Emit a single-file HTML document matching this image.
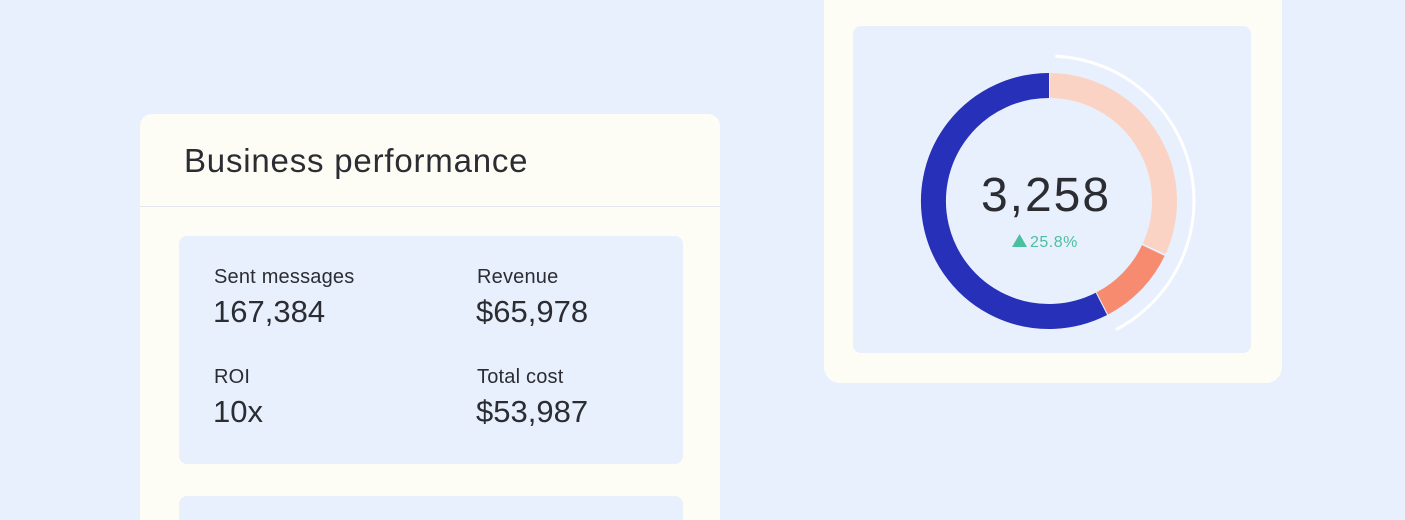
<!DOCTYPE html>
<html style="width:1405px;height:520px;overflow:hidden"><head><style>
*{margin:0;padding:0;box-sizing:border-box}
body{width:1405px;height:520px;background:#e8f0fe;position:relative;overflow:hidden;font-family:"Liberation Sans",sans-serif;color:#2b2d33}
.card{position:absolute;left:140px;top:114px;width:580px;height:406px;background:#fdfdf5;border-radius:12px 12px 0 0;overflow:hidden}
.hd{height:93px;border-bottom:1.5px solid #e3e6ec}
.hd h1{position:absolute;left:44px;top:28px;font-weight:400;font-size:33px;letter-spacing:0.8px}
.box{position:absolute;left:39px;width:504px;background:#e8f0fe;border-radius:8px}
.lab{position:absolute;font-size:20px;letter-spacing:0.2px}
.val{position:absolute;font-size:31px}
.rc{position:absolute;left:824px;top:0;width:458px;height:383px;background:#fdfdf5;border-radius:0 0 16px 16px}
.rin{position:absolute;left:29px;top:26px;width:398px;height:327px;background:#e8f0fe;border-radius:8px}
</style></head><body>
<div class="card">
 <div class="hd"><h1>Business performance</h1></div>
 <div class="box" style="top:122px;height:228px">
  <div class="lab" style="left:35px;top:30px">Sent messages</div>
  <div class="val" style="left:34px;top:58px">167,384</div>
  <div class="lab" style="left:298px;top:30px">Revenue</div>
  <div class="val" style="left:297px;top:58px">$65,978</div>
  <div class="lab" style="left:35px;top:130px">ROI</div>
  <div class="val" style="left:34px;top:158px">10x</div>
  <div class="lab" style="left:298px;top:130px">Total cost</div>
  <div class="val" style="left:297px;top:158px">$53,987</div>
 </div>
 <div class="box" style="top:382px;height:24px;border-radius:8px 8px 0 0"></div>
</div>
<div class="rc"><div class="rin"></div></div>
<svg style="position:absolute;left:0;top:0" width="1405" height="520">
 <g fill="none" stroke-width="25">
  <path d="M1101.4 303.9 A115.5 115.5 0 1 1 1049 85.5" stroke="#2630b8"/>
  <path d="M1050 85.5 A115.5 115.5 0 0 1 1154.1 248.9" stroke="#fbd3c4"/>
  <path d="M1153.3 250.5 A115.5 115.5 0 0 1 1102.3 303.4" stroke="#f78b70"/>
 </g>
 <path d="M1056.6 56.2 A145 145 0 0 1 1117.1 329" fill="none" stroke="#fff" stroke-width="3" stroke-linecap="round"/>
 <text x="1046" y="211" text-anchor="middle" font-family="Liberation Sans" font-size="48" fill="#2b2d33" letter-spacing="2">3,258</text>
 <path d="M1012 247 L1019.5 234 L1027 247 Z" fill="#4cbf9e"/>
 <text x="1030" y="247" font-family="Liberation Sans" font-size="16" fill="#4cbf9e" letter-spacing="0.5">25.8%</text>
</svg>
</body></html>
